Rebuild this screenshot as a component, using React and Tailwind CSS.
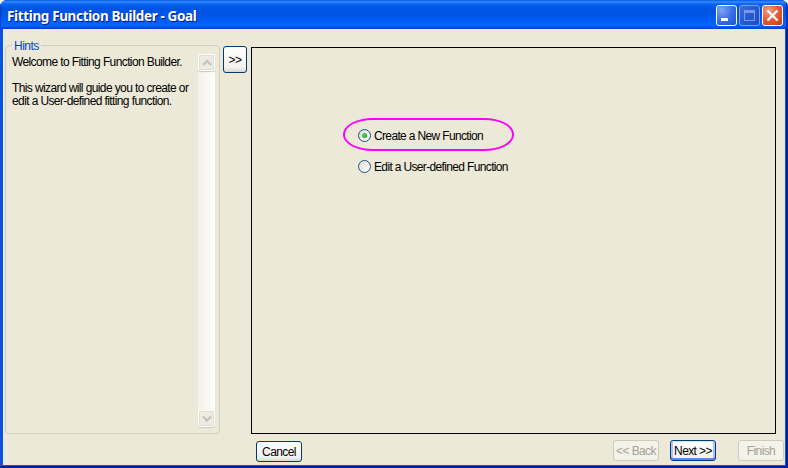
import React from "react";

const font = "font-['Liberation_Sans',Arial,sans-serif]";

function TitleButton({ kind }) {
  const tone =
    kind === "close"
      ? "border-white bg-[radial-gradient(circle_at_30%_25%,#f0a085_0%,#e45a35_50%,#cd3c15_100%)]"
      : kind === "min"
        ? "border-white bg-[radial-gradient(circle_at_25%_20%,#7ea5f4_0%,#3b70e8_50%,#1c4fd0_100%)]"
        : "border-[#7d9cea] bg-[linear-gradient(135deg,#3f6de0_0%,#2055d5_60%,#1a4dcc_100%)]";
  return (
    <div className={`h-[21px] w-[21px] shrink-0 rounded-[3px] border ${tone}`}>
      <svg width="19" height="19" viewBox="0 0 19 19" className="block" shapeRendering={kind === "close" ? "auto" : "crispEdges"}>
        {kind === "min" && <rect x="4" y="12" width="7" height="3" fill="#fff" />}
        {kind === "max" && (
          <>
            <rect x="4.5" y="4.5" width="10" height="10" fill="none" stroke="#7d97e8" />
            <rect x="4" y="4" width="11" height="3" fill="#7d97e8" />
          </>
        )}
        {kind === "close" && <path d="M4.5 4.5L14.5 14.5M14.5 4.5L4.5 14.5" stroke="#fff" strokeWidth="2.3" />}
      </svg>
    </div>
  );
}

function ScrollArrow({ down }) {
  return (
    <div className="flex h-[17px] w-[17px] items-center justify-center rounded-[2px] border border-white bg-[#edebe2] shadow-[0_1px_1px_#cbc9bc,inset_0_0_0_1px_#e0ded2]">
      <svg width="10" height="8" viewBox="0 0 10 8">
        <path d={down ? "M1 1.5L5 5.5L9 1.5" : "M1 6L5 2L9 6"} fill="none" stroke="#c5c4ba" strokeWidth="2.4" />
      </svg>
    </div>
  );
}

function Button({ children, kind = "normal", className = "" }) {
  const tone =
    kind === "disabled"
      ? "border-[#cdcabb] bg-[#f4f3ea] text-[#a3a193]"
      : kind === "default"
        ? "border-[#003c74] bg-[linear-gradient(#fff,#f2f1ec)] text-black shadow-[inset_0_1px_0_#cee7ff,inset_0_-2px_0_#6982ee,inset_2px_0_0_#abc6f4,inset_-2px_0_0_#abc6f4]"
        : "border-[#003c74] bg-[linear-gradient(#fff,#f3f2ed_80%,#dcd7cb)] text-black";
  return (
    <button className={`flex shrink-0 items-center justify-center whitespace-nowrap rounded-[3px] border ${tone} ${className}`}>
      {children}
    </button>
  );
}

function Radio({ checked, children }) {
  return (
    <div className="flex h-[13px] items-center gap-[3px]">
      <span className="flex h-[13px] w-[13px] items-center justify-center rounded-full border border-[#1c5180] bg-[linear-gradient(135deg,#dcdcd7,#fff)]">
        {checked && <span className="h-[5px] w-[5px] rounded-full bg-[radial-gradient(circle_at_35%_35%,#55d551,#139a13)]" />}
      </span>
      <span className="whitespace-nowrap pt-[1px] tracking-[-0.65px]">{children}</span>
    </div>
  );
}

export default function App() {
  return (
    <div className="h-[468px] w-[788px] overflow-hidden bg-white">
      <div className={`flex h-full w-full flex-col overflow-hidden rounded-t-[7px] bg-[#0831d9] text-[12px] leading-[13px] text-black ${font}`}>
        <header className="flex h-[29px] shrink-0 items-center justify-between bg-[linear-gradient(#0058e0_0%,#3a8cff_7%,#0a66f4_13%,#0054e3_28%,#0055e5_50%,#005bf5_70%,#0066ff_88%,#0050dc_95%,#003dc4_100%)] pl-[7px] pr-[5px] pt-[2px] shadow-[inset_1px_0_0_#0a3fc8,inset_-2px_0_0_#0a34bd]">
          <h1 className="whitespace-nowrap font-['Noto_Sans',sans-serif] text-[13.5px] font-bold leading-[18px] tracking-[-0.36px] text-white [text-shadow:1px_1px_0_#0a1883]">
            Fitting Function Builder - Goal
          </h1>
          <div className="flex gap-[2px]">
            <TitleButton kind="min" />
            <TitleButton kind="max" />
            <TitleButton kind="close" />
          </div>
        </header>
        <div className="flex min-h-0 flex-1 border-b-2 border-r-2 border-[#001ea0]">
          <div className="flex min-w-0 flex-1 border-b border-l-[3px] border-r border-[#0855dd] bg-[#ece9d8] pl-[2px]">
            <section className="mt-[16px] flex h-[389px] w-[215px] shrink-0 flex-col rounded-[4px] border border-[#d0d0bf]">
              <h2 className="-mt-[6px] ml-[6px] h-[13px] w-[29px] whitespace-nowrap bg-[#ece9d8] pl-[2px] tracking-[-0.5px] text-[#0046d5]">Hints</h2>
              <div className="flex h-[374px] justify-between pl-[6px] pr-[4px] pt-[1px]">
                <div className="whitespace-nowrap pt-[2px] tracking-[-0.61px]">
                  <p>Welcome to Fitting Function Builder.</p>
                  <p className="mt-[13px]">This wizard will guide you to create or</p>
                  <p>edit a User-defined fitting function.</p>
                </div>
                <div className="flex h-[373px] w-[17px] shrink-0 flex-col justify-between bg-[linear-gradient(90deg,#f3f1e9,#fefefb)]">
                  <ScrollArrow />
                  <ScrollArrow down />
                </div>
              </div>
            </section>
            <Button className="ml-[3px] mt-[17px] h-[27px] w-[24px] pt-[1px] tracking-[-0.5px]">&gt;&gt;</Button>
            <div className="ml-[4px] flex w-[534px] shrink-0 flex-col">
              <main className="mt-[18px] h-[387px] w-[525px] border border-black pl-[106px] pt-[81px]">
                <div className="relative flex flex-col gap-[18px]">
                  <div className="absolute -left-[15px] -top-[11px] h-[33px] w-[171px] rounded-[30px/16px] border-2 border-[#ff00ff]" />
                  <Radio checked>Create a New Function</Radio>
                  <Radio>Edit a User-defined Function</Radio>
                </div>
              </main>
              <footer className="mt-[6px] flex pl-[5px] tracking-[-0.6px]">
                <Button className="mt-[1px] h-[21px] w-[46px] pt-[1px]">Cancel</Button>
                <Button kind="disabled" className="ml-[311px] h-[21px] w-[46px] pt-[1px]">&lt;&lt; Back</Button>
                <Button kind="default" className="ml-[11px] h-[21px] w-[46px] pt-[1px]">Next &gt;&gt;</Button>
                <Button kind="disabled" className="ml-[22px] h-[21px] w-[46px] pt-[1px]">Finish</Button>
              </footer>
            </div>
          </div>
        </div>
      </div>
    </div>
  );
}
